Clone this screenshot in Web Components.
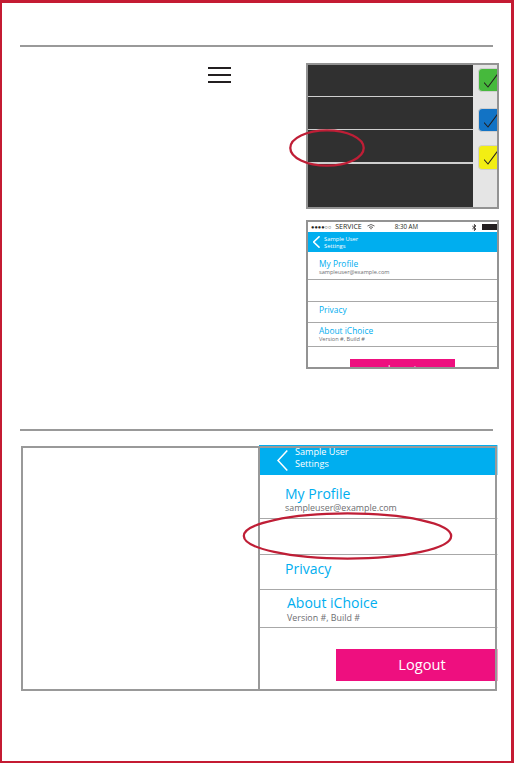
<!DOCTYPE html>
<html lang="en"><head><meta charset="utf-8"><title>Settings wireframe</title>
<style>html,body{margin:0;padding:0;background:#fff}body{font-family:"Open Sans","Liberation Sans",sans-serif}</style>
</head><body>
<x-frame>
  <x-rule></x-rule>
  <x-top-section>
    <x-menu-icon slot="menu"></x-menu-icon>
    <x-check-screen slot="screens"></x-check-screen>
    <x-settings slot="screens" status style="--w:193px;--h:149px;--bw:2px;--barh:20px;--barx:5px;--chev-w:7px;--chev-h:12px;--chev-gap:4px;--bar-fs:5.8px;--bar-lh:7px;--bar-pt:2px;--bar-pb:0px;--t-fs:8.4px;--t-lh:10px;--s-fs:5.6px;--s-lh:6px;--btn-l:42px;--btn-w:105px;--btn-h:20px;--btn-mt:12px;--btn-fs:9px;--btn-px:0px">
      <x-row style="--rh:28px;--x:11px;--pt:7px"><span slot="title">My Profile</span><span slot="sub">sampleuser@example.com</span></x-row>
      <x-row style="--rh:22px"></x-row>
      <x-row style="--rh:21px;--x:11px;--pt:3px"><span slot="title">Privacy</span></x-row>
      <x-row style="--rh:24px;--x:11px;--pt:3px"><span slot="title">About iChoice</span><span slot="sub">Version #, Build #</span></x-row>
    </x-settings>
  </x-top-section>
  <x-rule></x-rule>
  <x-panel>
    <x-settings style="--w:239px;--h:240px;--bw:0px;--barh:30px;--barx:18px;--chev-w:11px;--chev-h:21px;--chev-gap:7px;--bar-fs:9.1px;--bar-lh:12px;--bar-pt:0px;--bar-pb:5px;--t-fs:14px;--t-lh:17px;--s-fs:8.9px;--s-lh:11px;--btn-l:77px;--btn-w:162px;--btn-h:32px;--btn-mt:21px;--btn-fs:14.6px;--btn-px:10px">
      <x-row style="--rh:44px;--x:26px;--pt:10px"><span slot="title">My Profile</span><span slot="sub">sampleuser@example.com</span></x-row>
      <x-row style="--rh:36px"></x-row>
      <x-row style="--rh:35px;--x:26px;--pt:5px"><span slot="title">Privacy</span></x-row>
      <x-row style="--rh:38px;--x:28px;--pt:4px;--sg:1px"><span slot="title">About iChoice</span><span slot="sub">Version #, Build #</span></x-row>
    </x-settings>
  </x-panel>
  <x-ring style="--l:288px;--t:127px;--rw:74px;--rh:36px"></x-ring>
  <x-ring style="--l:241px;--t:510px;--rw:209px;--rh:46px"></x-ring>
</x-frame>
<script>
function def(name, css, html){
  customElements.define(name, class extends HTMLElement{
    constructor(){super();this.attachShadow({mode:'open'}).innerHTML='<style>'+css+'</style>'+html;}
  });
}
def('x-frame',
 ':host{display:block;position:relative;box-sizing:border-box;width:514px;height:763px;border-style:solid;border-color:#c41b33;border-width:3px 3px 2px 2px;overflow:hidden;padding-top:42px;background:#fff}',
 '<slot></slot>');
def('x-rule',':host{display:block;height:2px;width:473px;margin-left:18px;background:#999}','');
def('x-top-section',
 ':host{display:flex;height:382px;margin-left:18px;width:479px}.l{width:286px;flex:none;padding:20px 0 0 188px;box-sizing:border-box}.r{display:flex;flex-direction:column;gap:11px;padding-top:16px}',
 '<div class="l"><slot name="menu"></slot></div><div class="r"><slot name="screens"></slot></div>');
def('x-menu-icon',
 ':host{display:flex;flex-direction:column;gap:5px;width:23px}i{display:block;height:2px;background:#231f20}',
 '<i></i><i></i><i></i>');
const tick='<svg width="20" height="20" viewBox="0 0 20 20"><path d="M0 9.5 L4 14 L14 0.5" fill="none" stroke="#231f20" stroke-width="1.1"/></svg>';
def('x-check-screen',
 ':host{display:flex;box-sizing:border-box;width:193px;height:146px;border:2px solid #939393;overflow:hidden}'+
 '.d{width:165px;flex:none;background:#303030;display:flex;flex-direction:column}.d i{display:block;height:31px;border-bottom:1px solid #cfcfcf}.d i:nth-child(2),.d i:nth-child(3){height:32px}.d i:nth-child(3){border-bottom-width:2px}'+
 '.p{flex:1;background:#e5e5e5;padding:3px 0 0 5px;overflow:hidden}'+
 '.c{box-sizing:border-box;width:26px;height:24px;border:1px solid #cfcfcf;border-radius:4px;margin-bottom:16px;padding:4px 0 0 5px;display:block}.c svg{display:block}'+
 '.g{background:#46b93c}.b{background:#1273c5;}.y{background:#f3ee13;height:25px;margin-top:-3px}',
 '<div class="d"><i></i><i></i><i></i></div><div class="p"><span class="c g">'+tick+'</span><span class="c b">'+tick+'</span><span class="c y">'+tick+'</span></div>');
def('x-settings',
 ':host{display:block;box-sizing:border-box;width:var(--w);height:var(--h);border:var(--bw) solid #939393;overflow:hidden;background:#fff;flex:none}'+
 '.st{display:none;height:10px;align-items:center;font:5.6px/10px "Open Sans",sans-serif;color:#231f20;padding:0 0 0 3px;white-space:nowrap}'+
 ':host([status]) .st{display:flex}.st .sv{font-size:7px;margin-left:4px}.st .tm{margin-left:20px;font-size:6.2px}.st .sp{flex:1}.st svg{display:block}.st .wf{margin-left:5px}'+
 '.bar{display:flex;align-items:center;height:var(--barh);background:#00aeef;color:#fff;padding-left:var(--barx);gap:var(--chev-gap)}'+
 '.bar svg{width:var(--chev-w);height:var(--chev-h);flex:none;display:block}'+
 '.bar .t{font-size:var(--bar-fs);line-height:var(--bar-lh);padding-top:var(--bar-pt);padding-bottom:var(--bar-pb);font-weight:400}'+
 '.btn{display:flex;justify-content:center;align-items:center;margin-top:var(--btn-mt);margin-left:var(--btn-l);width:var(--btn-w);height:var(--btn-h);background:#ee0f7f;color:#fff;font-size:var(--btn-fs);box-sizing:border-box;padding:0 0 2px var(--btn-px)}',
 '<div class="st"><span>●●●●○○</span><span class="sv">SERVICE</span><svg class="wf" width="8" height="6" viewBox="0 0 8 6"><path d="M.5 2Q4-1 7.5 2M2 3.5Q4 2 6 3.5M3.2 4.8Q4 4.2 4.8 4.8" fill="none" stroke="#231f20" stroke-width=".7"/></svg><span class="tm">8:30 AM</span><span class="sp"></span><svg width="5" height="7" viewBox="0 0 5 7"><path d="M.3 2 4 5 2.4 6.6V.4L4 2 .3 5" fill="none" stroke="#231f20" stroke-width=".8"/></svg><svg style="margin-left:5px" width="15" height="6" viewBox="0 0 15 6"><rect width="15" height="6" fill="#231f20"/></svg></div>'+
 '<div class="bar"><svg viewBox="0 0 11 21" preserveAspectRatio="none"><path d="M10.3 .5 1 10.5l9.3 10" fill="none" stroke="#fff" stroke-width="1.5" vector-effect="non-scaling-stroke"/></svg><div class="t">Sample User<br>Settings</div></div>'+
 '<slot></slot><div class="btn">Logout</div>');
def('x-row',
 ':host{display:block;box-sizing:border-box;height:var(--rh);border-bottom:1px solid #a8a8a8;padding:var(--pt,0) 0 0 var(--x,0)}'+
 '.a{display:block;font-size:var(--t-fs);line-height:var(--t-lh);color:#00aeef}.b{display:block;font-size:var(--s-fs);line-height:var(--s-lh);color:#6d6e71;margin-top:var(--sg,0)}',
 '<span class="a"><slot name="title"></slot></span><span class="b"><slot name="sub"></slot></span>');
def('x-panel',
 ':host{display:block;position:relative;box-sizing:border-box;width:476px;height:245px;margin:15px 0 0 19px;border:2px solid #999;padding-left:235px}'+
 '.w{margin:-3px -4px 0 0;padding-left:1px}:host::after{content:"";position:absolute;inset:-2px;border:2px solid #999;pointer-events:none}.v{position:absolute;left:235px;top:-2px;bottom:-2px;width:2px;background:#999}'+
 ':host::before{content:"";position:absolute;z-index:1;right:-3px;width:1px;top:-3px;bottom:0;background:rgba(255,255,255,.6)}',
 '<div class="w"><slot></slot></div><div class="v"></div>');
def('x-ring',
 ':host{display:block;position:absolute;left:var(--l);top:var(--t);width:var(--rw);height:var(--rh)}svg{display:block;width:100%;height:100%;overflow:visible}',
 '<svg viewBox="0 0 100 100" preserveAspectRatio="none"><ellipse cx="50" cy="50" rx="49.6" ry="49" fill="none" stroke="#bf1e36" stroke-width="2.3" vector-effect="non-scaling-stroke"/></svg>');
</script>
</body></html>
